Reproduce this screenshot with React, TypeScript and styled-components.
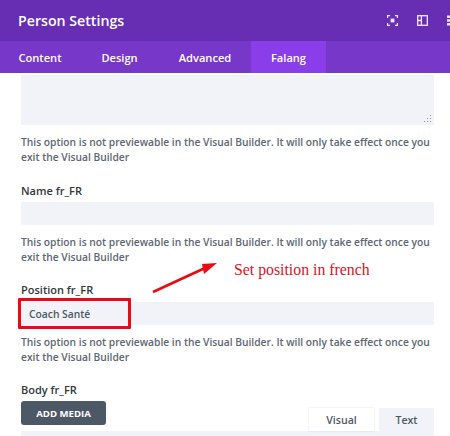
import styled, { createGlobalStyle } from 'styled-components';

const GlobalStyle = createGlobalStyle`
  html, body {
    margin: 0;
    padding: 0;
    background: #fff;
  }
  body {
    font-family: "Open Sans", "Liberation Sans", sans-serif;
  }
`;

const Modal = styled.div`
  position: relative;
  width: 450px;
  height: 436px;
  overflow: hidden;
  background: #fff;
`;

const Header = styled.div`
  height: 41px;
  display: flex;
  align-items: center;
  justify-content: space-between;
  padding-left: 18px;
  background: #672db3;
  color: #fff;
`;

const Title = styled.h1`
  margin: 0;
  font-size: 14.2px;
  font-weight: 600;
`;

const HeaderIcons = styled.div`
  display: flex;
  align-items: center;
  gap: 19px;
  margin-right: -8px;
`;

const Tabs = styled.div`
  height: 32px;
  display: flex;
  background: #7737c9;
`;

const Tab = styled.div<{ $active?: boolean; $width: number }>`
  width: ${({ $width }) => $width}px;
  display: flex;
  align-items: center;
  justify-content: center;
  font-size: 11.1px;
  font-weight: 600;
  color: #fff;
  background: ${({ $active }) => ($active ? '#8a3eea' : 'transparent')};
`;

const Content = styled.div`
  padding: 2px 16px 0 21px;
`;

const TextArea = styled.div`
  position: relative;
  height: 50px;
  background: #f1f3f8;
`;

const Grip = styled.svg`
  position: absolute;
  right: 2px;
  bottom: 2px;
`;

const Help = styled.p<{ $top: number }>`
  margin: ${({ $top }) => $top}px 0 0;
  font-size: 10.25px;
  line-height: 15px;
  font-weight: 600;
  color: #5c6672;
  white-space: nowrap;
`;

const Label = styled.div<{ $top: number }>`
  margin-top: ${({ $top }) => $top}px;
  font-size: 11px;
  line-height: 17px;
  font-weight: 600;
  color: #32373c;
`;

const Input = styled.div<{ $top: number }>`
  height: 23px;
  box-sizing: border-box;
  margin-top: ${({ $top }) => $top}px;
  padding: 1px 0 0 8px;
  display: flex;
  align-items: center;
  border-radius: 2px;
  font-size: 10.3px;
  font-weight: 600;
  color: #4c5866;
  background: #f1f3f8;
`;

const MediaRow = styled.div`
  display: flex;
  align-items: flex-end;
  justify-content: space-between;
  height: 30px;
  margin-top: 3px;
`;

const MediaButton = styled.button`
  align-self: flex-start;
  width: 85px;
  height: 24px;
  padding: 0;
  border: 0;
  border-radius: 3px;
  font-family: inherit;
  font-size: 9.6px;
  font-weight: 700;
  color: #fff;
  background: #4c5866;
`;

const EditorTabs = styled.div`
  display: flex;
  gap: 5px;
`;

const EditorTab = styled.div<{ $active?: boolean; $width: number }>`
  width: ${({ $width }) => $width}px;
  height: 23px;
  display: flex;
  align-items: center;
  justify-content: center;
  font-size: 10.6px;
  font-weight: 600;
  color: #4c5866;
  background: ${({ $active }) => ($active ? '#f1f3f8' : '#fff')};
  box-shadow: ${({ $active }) => ($active ? 'none' : '0 0 2px rgba(120, 130, 150, 0.25)')};
`;

const Editor = styled.div`
  height: 20px;
  background: #f1f3f8;
`;

const Highlight = styled.div`
  position: absolute;
  left: 18px;
  top: 298px;
  width: 113px;
  height: 31px;
  box-sizing: border-box;
  border: 3px solid #ea0a14;
  border-radius: 1px;
`;

const Arrow = styled.svg`
  position: absolute;
  left: 150px;
  top: 258px;
`;

const Note = styled.div`
  position: absolute;
  left: 234px;
  top: 261px;
  font-family: "Liberation Serif", serif;
  font-size: 15.8px;
  line-height: 18px;
  color: #e2101c;
  white-space: nowrap;
`;

const helpFirst = 'This option is not previewable in the Visual Builder. It will only take effect once you';
const helpSecond = 'exit the Visual Builder';

const HelpText = ({ top }: { top: number }) => (
  <Help $top={top}>
    {helpFirst}
    <br />
    {helpSecond}
  </Help>
);

const App = () => {
  return (
    <Modal>
      <GlobalStyle />
      <Header>
        <Title>Person Settings</Title>
        <HeaderIcons>
          <svg width="11" height="11" viewBox="0 0 11 11" fill="none" stroke="#f1e6ff" strokeWidth="1.2">
            <path d="M0.6 3V0.6H3M8 0.6H10.4V3M10.4 8V10.4H8M3 10.4H0.6V8" />
            <rect x="3.6" y="3.6" width="3.8" height="3.8" fill="#f1e6ff" stroke="none" />
          </svg>
          <svg width="11" height="11" viewBox="0 0 11 11" fill="none" stroke="#f1e6ff" strokeWidth="1.3">
            <rect x="0.7" y="0.7" width="9.6" height="9.6" />
            <path d="M4.4 0.7V10.3M0.7 5.5H4.4" />
          </svg>
          <svg width="11" height="11" viewBox="0 0 11 11" fill="#f1e6ff">
            <rect x="0" y="0.5" width="3" height="2.4" />
            <rect x="0" y="4.3" width="3" height="2.4" />
            <rect x="0" y="8.1" width="3" height="2.4" />
          </svg>
        </HeaderIcons>
      </Header>
      <Tabs>
        <Tab $width={80}>Content</Tab>
        <Tab $width={79}>Design</Tab>
        <Tab $width={92}>Advanced</Tab>
        <Tab $width={75} $active>
          Falang
        </Tab>
      </Tabs>
      <Content>
        <TextArea>
          <Grip width="8" height="8" viewBox="0 0 8 8" fill="#8d95a0">
            <rect x="6" y="0" width="1" height="1" />
            <rect x="6" y="3" width="1" height="1" />
            <rect x="3" y="3" width="1" height="1" />
            <rect x="6" y="6" width="1" height="1" />
            <rect x="3" y="6" width="1" height="1" />
            <rect x="0" y="6" width="1" height="1" />
          </Grip>
        </TextArea>
        <HelpText top={10} />
        <Label $top={17}>Name fr_FR</Label>
        <Input $top={3} />
        <HelpText top={10} />
        <Label $top={16}>Position fr_FR</Label>
        <Input $top={4}>Coach Santé</Input>
        <HelpText top={10} />
        <Label $top={16}>Body fr_FR</Label>
        <MediaRow>
          <MediaButton>ADD MEDIA</MediaButton>
          <EditorTabs>
            <EditorTab $width={65}>Visual</EditorTab>
            <EditorTab $width={55} $active>
              Text
            </EditorTab>
          </EditorTabs>
        </MediaRow>
        <Editor />
      </Content>
      <Arrow width="70" height="40" viewBox="0 0 70 40">
        <path d="M3 34L55 10" stroke="#ea0a14" strokeWidth="2.6" fill="none" />
        <path d="M67 5L52 6L54 16Z" fill="#ea0a14" />
      </Arrow>
      <Note>Set position in french</Note>
      <Highlight />
    </Modal>
  );
};

export default App;
